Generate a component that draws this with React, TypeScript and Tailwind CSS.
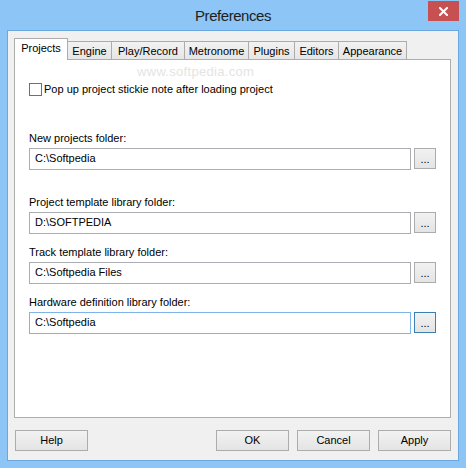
import React from "react";

const tabs = [
  { name: "Projects", w: "w-[54px]" },
  { name: "Engine", w: "w-[45px]" },
  { name: "Play/Record", w: "w-[74px]" },
  { name: "Metronome", w: "w-[65px]" },
  { name: "Plugins", w: "w-[47px]" },
  { name: "Editors", w: "w-[45px]" },
  { name: "Appearance", w: "w-[69px]" },
];

function Field({
  label,
  value,
  focused,
  className,
}: {
  label: string;
  value: string;
  focused?: boolean;
  className?: string;
}) {
  return (
    <div className={"flex flex-col " + (className || "")}>
      <div className="h-[13px] leading-[13px] text-[11px] text-black">{label}</div>
      <div className="mt-[3px] flex items-start">
        <div
          className={
            "w-[382px] h-[22px] border bg-white pl-[5px] pt-[3px] leading-[13px] text-[11px] text-black " +
            (focused ? "border-[#7eb4ea]" : "border-[#abadb3]")
          }
        >
          {value}
        </div>
        <div
          className={
            "ml-[3px] w-[22px] h-[21px] border flex items-center justify-center leading-[13px] text-[11px] text-black bg-gradient-to-b from-[#f2f2f2] to-[#e4e4e4] " +
            (focused ? "border-[#3c7fb1]" : "border-[#acacac]")
          }
        >
          <span className="mt-[2px]">...</span>
        </div>
      </div>
    </div>
  );
}

function Btn({ label, className }: { label: string; className?: string }) {
  return (
    <div
      className={
        "w-[73px] h-[21px] border border-[#acacac] bg-gradient-to-b from-[#f2f2f2] to-[#e4e4e4] flex items-center justify-center leading-[13px] text-[11px] text-black " +
        (className || "")
      }
    >
      {label}
    </div>
  );
}

export default function App() {
  return (
    <div className="w-[466px] h-[468px] bg-[#8dc5f6] flex flex-col font-['Liberation_Sans',Arial,sans-serif] overflow-hidden">
      {/* title bar */}
      <div className="relative h-[30px] flex items-center justify-center">
        <span className="text-[15px] tracking-[-0.45px] text-[#1e1e1e] leading-[30px] mt-[1px]">
          Preferences
        </span>
        <div className="absolute right-[7px] top-[1px] w-[31px] h-[20px] bg-[#c75050] flex items-center justify-center">
          <svg width="9" height="9" viewBox="0 0 9 9">
            <path d="M1 1 L8 8 M8 1 L1 8" stroke="#ffffff" strokeWidth="2" strokeLinecap="square" />
          </svg>
        </div>
      </div>

      {/* client area */}
      <div className="mx-[7px] mb-[7px] flex-1 border border-[#6aa7de] bg-[#f0f0f0] pl-[6px] pt-[7px] flex flex-col">
        {/* tabs */}
        <div className="flex items-end h-[21px]">
          {tabs.map((t, i) => {
            const selected = i === 0;
            return (
              <div
                key={t.name}
                className={
                  t.w +
                  " border-l border-t border-r border-[#acacac] text-[11px] leading-[13px] text-black text-center " +
                  (i > 0 ? "-ml-px " : "") +
                  (selected
                    ? "relative z-10 h-[22px] -mb-px bg-white pt-[3px]"
                    : "h-[18px] bg-gradient-to-b from-[#f2f2f2] to-[#e6e6e6] pt-[3px]")
                }
              >
                {t.name}
              </div>
            );
          })}
        </div>

        {/* panel */}
        <div className="relative w-[437px] h-[359px] border border-[#adadad] bg-white pt-[23px] pl-[14px] flex flex-col">
          <div className="absolute left-[122px] top-[5px] text-[13px] tracking-[0.3px] text-[#e4e4e4] leading-[13px]">
            www.softpedia.com
          </div>

          <div className="flex items-center h-[13px]">
            <div className="w-[13px] h-[13px] border border-[#707070] bg-white" />
            <span className="ml-[2px] text-[11px] leading-[13px] text-black">
              Pop up project stickie note after loading project
            </span>
          </div>

          <Field className="mt-[36px]" label="New projects folder:" value="C:\Softpedia" />
          <Field className="mt-[26px]" label="Project template library folder:" value="D:\SOFTPEDIA" />
          <Field className="mt-[12px]" label="Track template library folder:" value="C:\Softpedia Files" />
          <Field className="mt-[12px]" label="Hardware definition library folder:" value="C:\Softpedia" focused />
        </div>

        {/* bottom buttons */}
        <div className="mt-[12px] w-[437px] flex">
          <Btn label="Help" className="ml-px" />
          <div className="ml-auto flex gap-[8px]">
            <Btn label="OK" />
            <Btn label="Cancel" />
            <Btn label="Apply" />
          </div>
        </div>
      </div>
    </div>
  );
}
